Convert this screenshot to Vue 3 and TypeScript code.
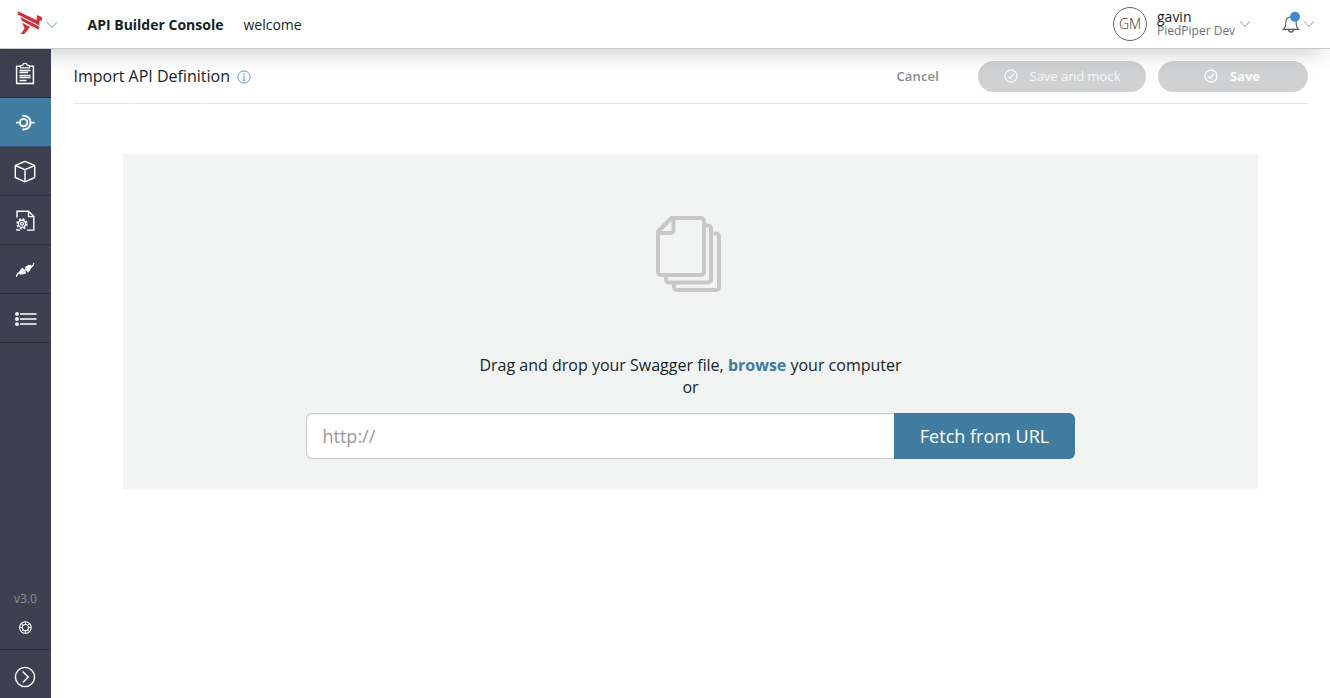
<script setup lang="ts">
import { ref } from 'vue'

type NavName = 'clipboard' | 'api' | 'cube' | 'config' | 'plug' | 'list'
const items: NavName[] = ['clipboard', 'api', 'cube', 'config', 'plug', 'list']
const active = ref<NavName>('api')
const url = ref('')
</script>

<template>
  <div class="app">
    <header class="topbar">
      <svg class="logo" width="26" height="24" viewBox="0 0 26 24" fill="#d92b32">
        <path d="M.8.2 19.8 9.2V4L25 6.2V9.6H22.4V14.4L.8 3.4Z" />
        <path d="M3.2 6 21.8 15.2V18.8L5.2 10Z" />
        <path d="M5.2 11.8 13 16 7.4 23H3.6L7.6 17.6Z" />
      </svg>
      <svg class="chev chev-logo" width="12" height="8" viewBox="0 0 12 8"><path d="M.8 1.2 6 6.3 11.2 1.2" /></svg>
      <strong class="product">API Builder Console</strong>
      <span class="project">welcome</span>
      <div class="avatar">GM</div>
      <div class="account">
        <span class="user">gavin</span>
        <span class="org">PiedPiper Dev</span>
      </div>
      <svg class="chev chev-user" width="12" height="8" viewBox="0 0 12 8"><path d="M.8 1.2 6 6.3 11.2 1.2" /></svg>
      <svg class="bell" width="20" height="24" viewBox="0 0 20 24">
        <path d="M1.3 18.4C4 16.5 3.7 14 3.9 10.8 4.1 7.6 6 6 9 6s4.9 1.6 5.1 4.8c.2 3.2-.1 5.7 2.6 7.6ZM6.5 18.6c.3 3.4 4.7 3.4 5 0" fill="none" stroke="#555" stroke-width="1.1" />
        <circle cx="13" cy="5.8" r="5" fill="#3d8bd0" />
      </svg>
      <svg class="chev chev-bell" width="12" height="8" viewBox="0 0 12 8"><path d="M.8 1.2 6 6.3 11.2 1.2" /></svg>
    </header>

    <div class="body">
      <aside class="sidebar">
        <nav>
          <a v-for="name in items" :key="name" class="nav-item" :class="{ active: active === name }" @click="active = name">
            <svg width="24" height="24" viewBox="0 0 24 24" fill="none" stroke="#fff" stroke-width="1.3">
              <g v-if="name === 'clipboard'">
                <path d="M7.5 4.2H3.6v17.2h16.8V4.2h-3.9" stroke-width="1.5" />
                <path d="M7.5 5.8V4.2c0-.8 1.3-.9 2.3-1C10 .7 14 .7 14.2 3.2c1 .1 2.3.2 2.3 1v1.6Z" />
                <path d="M6.5 8.5h11M6.5 10.5h8.5M6.5 13.5h11M6.5 15.5h11M6.5 18.5h7" stroke-width="1.3" />
              </g>
              <g v-else-if="name === 'api'" stroke-width="1.9">
                <circle cx="10.6" cy="11.6" r="3.7" />
                <path d="M3 11.6h4M9.3 4.8c4.4-.6 8.3 2.2 8.3 6.8s-3.9 7.4-8.3 6.8M17.4 11.6H21.6" />
              </g>
              <g v-else-if="name === 'cube'" stroke-width="1.4" stroke-linejoin="round">
                <path d="M12 1.4 21.7 5.5v12L12 21.8l-9.7-4.3v-12ZM2.3 5.5 12 9.6l9.7-4.1M12 9.6v12" />
              </g>
              <g v-else-if="name === 'config'">
                <path d="M4 8.5V2.2h11.5L20.8 7.6v13.5H14M15.5 2.2v5.4h5.3M4 19.8v1.3h3" stroke-width="1.4" />
                <circle cx="9" cy="14.8" r="3.6" stroke-width="1.4" />
                <circle cx="9" cy="14.8" r="1.4" stroke-width="1.2" />
                <circle cx="9" cy="14.8" r="4.8" stroke-width="1.7" stroke-dasharray="2 1.77" />
              </g>
              <g v-else-if="name === 'plug'">
                <path d="M3.5 18.8c.2-3 1.2-3.8 3.4-4.4M17 9.3c2.4-.4 3.4-1.4 3.7-4.3" stroke-width="1.4" />
                <path d="m6 14 2-3 1.6-1.4 1.4 2 1.6-.6-.6 1.8 1.4 2.4-4 1.4-3-.1Zm6-5 3.8-2.2 2.5.5.2 2.4-2 3.4-1.6 1.6-1.5-2.3-1.5.3.7-1.7Z" fill="#fff" stroke="none" />
              </g>
              <g v-else>
                <path d="M7 6.9H23.5M7 12H23.5M7 17.1H23.5" stroke-width="1.5" />
                <g stroke-width="1.5">
                  <circle cx="4" cy="6.9" r="1.2" />
                  <circle cx="4" cy="12" r="1.2" />
                  <circle cx="4" cy="17.1" r="1.2" />
                </g>
              </g>
            </svg>
          </a>
        </nav>
        <div class="side-foot">
          <span class="version">v3.0</span>
          <svg class="help" width="14" height="14" viewBox="0 0 14 14" fill="none" stroke="#fff">
            <circle cx="7.4" cy="6.6" r="5.8" stroke-width="1.1" />
            <circle cx="7.4" cy="6.6" r="3.1" stroke-width="1.1" />
            <path d="M7.4.8v3M7.4 9.4v3M1.6 6.6h3M10.2 6.6h3M3.3 2.5l2 2M9.5 8.7l2 2M3.3 10.7l2-2M9.5 4.5l2-2" stroke-width=".9" />
          </svg>
          <a class="expand">
            <svg width="22" height="22" viewBox="0 0 22 22" fill="none" stroke="#fff">
              <circle cx="11" cy="11" r="9.6" stroke-width="1.4" />
              <path d="m8.7 5.5 5.5 5.5-5.5 5.5" stroke-width="1.5" />
            </svg>
          </a>
        </div>
      </aside>

      <main class="main">
        <div class="page-head">
          <h1>Import API Definition</h1>
          <svg class="info" width="14" height="14" viewBox="0 0 14 14" fill="none" stroke="#659bb9">
            <circle cx="7" cy="7" r="6.1" stroke-width="1" />
            <path d="M7 6.1v4.2M5.9 6.2H7M5.7 10.3h2.6" stroke-width="1" />
            <path d="M7 3.4v1.3" stroke-width="1.3" />
          </svg>
          <button class="cancel">Cancel</button>
          <button class="pill mock" disabled>
            <svg width="14" height="14" viewBox="0 0 14 14"><circle cx="7" cy="7" r="6" /><path d="m4.2 7.2 2 2 3.9-4.4" /></svg>
            <span>Save and mock</span>
          </button>
          <button class="pill save" disabled>
            <svg width="14" height="14" viewBox="0 0 14 14"><circle cx="7" cy="7" r="6" /><path d="m4.2 7.2 2 2 3.9-4.4" /></svg>
            <span>Save</span>
          </button>
        </div>

        <section class="dropzone">
          <svg class="files" width="66" height="77" viewBox="0 0 66 77" fill="none" stroke="#c8c8c8" stroke-width="4" stroke-linejoin="round">
            <path d="M49.5 9.5h2.5a3 3 0 0 1 3 3v51a3 3 0 0 1-3 3H13a3 3 0 0 1-3-3v-3" />
            <path d="M57.5 17.5H60a3 3 0 0 1 3 3v50.5a3 3 0 0 1-3 3H21a3 3 0 0 1-3-3v-3" />
            <path d="M15.5 2H45a3 3 0 0 1 3 3v51a3 3 0 0 1-3 3H5a3 3 0 0 1-3-3V15.5ZM17.5 2v12a3 3 0 0 1-3 3H2" />
          </svg>
          <p class="hint">Drag and drop your Swagger file, <a>browse</a> your computer<br />or</p>
          <form class="fetch" @submit.prevent>
            <input v-model="url" type="text" placeholder="http://" />
            <button type="submit">Fetch from URL</button>
          </form>
        </section>
      </main>
    </div>
  </div>
</template>

<style>
body {
  margin: 0;
}
</style>

<style scoped>
.app {
  height: 100vh;
  display: flex;
  flex-direction: column;
  overflow: hidden;
  background: #fff;
  color: #151f26;
  font-family: "Open Sans", "Noto Sans", sans-serif;
}
* {
  box-sizing: border-box;
}
svg {
  display: block;
  flex: none;
}
button {
  font-family: inherit;
  border: 0;
  padding: 0;
}
.topbar {
  position: relative;
  z-index: 2;
  flex: none;
  height: 49px;
  display: flex;
  align-items: center;
  padding: 0 15px 0 17px;
  background: #fff;
  border-bottom: 1px solid #c5c9c7;
  box-shadow: 0 12px 20px -8px rgba(50, 60, 50, 0.25);
}
.logo {
  margin-top: -3px;
}
.chev {
  fill: none;
  stroke: #8d969b;
  stroke-width: 1;
}
.chev-logo {
  margin-left: 3px;
  margin-top: 1px;
  stroke: #719bb0;
}
.product {
  margin-left: 29.5px;
  font-size: 14px;
  font-weight: 700;
  white-space: nowrap;
}
.project {
  margin-left: 20px;
  font-size: 14px;
}
.avatar {
  margin-left: auto;
  width: 34px;
  height: 34px;
  border: 1px solid #666;
  border-radius: 50%;
  text-align: center;
  font-size: 14px;
  font-weight: 300;
  line-height: 32px;
  color: #333;
}
.account {
  margin-left: 10px;
  margin-top: -1px;
  width: 79px;
  display: flex;
  flex-direction: column;
  white-space: nowrap;
}
.user {
  font-size: 14px;
  line-height: 14px;
}
.org {
  font-size: 12px;
  line-height: 14px;
  color: #6c7176;
}
.chev-user {
  margin-left: 3px;
}
.bell {
  margin-left: 31px;
  margin-top: -3px;
}
.chev-bell {
  margin-left: 1px;
}
.body {
  flex: 1;
  display: flex;
  min-height: 0;
}
.sidebar {
  width: 51px;
  flex: none;
  display: flex;
  flex-direction: column;
  justify-content: space-between;
  background: #3d4050;
}
.nav-item {
  height: 49px;
  display: flex;
  align-items: center;
  justify-content: center;
  padding: 2px 1px 0 0;
  border-bottom: 1px solid #292c3a;
  cursor: pointer;
}
.nav-item.active {
  background: #407ca0;
  border-bottom-color: #35566d;
}
.side-foot {
  display: flex;
  flex-direction: column;
  align-items: center;
}
.version {
  font-size: 12px;
  line-height: 16px;
  color: #8d9093;
}
.help {
  margin-top: 14px;
  margin-right: 1px;
}
.expand {
  width: 100%;
  height: 49px;
  margin-top: 14px;
  padding: 6px 1px 0 0;
  display: flex;
  align-items: center;
  justify-content: center;
  border-top: 1px solid #292c3a;
}
.main {
  flex: 1;
  min-width: 0;
  padding: 0 22px;
}
.page-head {
  height: 55px;
  margin-left: 0.5px;
  display: flex;
  align-items: center;
  border-bottom: 1px solid #e6e6e6;
}
h1 {
  margin: 0;
  font-size: 16px;
  font-weight: 400;
  line-height: 22px;
}
.info {
  margin-left: 7px;
  margin-top: 1px;
}
.cancel {
  margin-left: auto;
  background: none;
  font-size: 13px;
  font-weight: 600;
  letter-spacing: 0.15px;
  color: #868a8d;
}
.pill {
  height: 31px;
  display: flex;
  align-items: center;
  justify-content: center;
  border-radius: 16px;
  background: #d0d1d3;
  color: #fff;
  font-size: 13px;
}
.pill svg {
  margin-right: 12px;
  fill: none;
  stroke: currentColor;
  stroke-width: 1.3;
}
.mock {
  width: 168px;
  margin-left: 39px;
  font-weight: 500;
  color: #f8f8f8;
}
.save {
  width: 150px;
  margin-left: 12px;
  padding-right: 2px;
  font-weight: 700;
}
.dropzone {
  margin: 50px 50px 0;
  height: 335px;
  padding-top: 62px;
  display: flex;
  flex-direction: column;
  align-items: center;
  background: #f2f4f4;
}
.files {
  margin-right: 4px;
}
.hint {
  margin: 61px 0 0;
  font-size: 16px;
  line-height: 22px;
  text-align: center;
}
.hint a {
  color: #407ca0;
  font-weight: 700;
}
.fetch {
  margin-top: 15px;
  width: 769px;
  height: 46px;
  display: flex;
}
.fetch input {
  flex: 1;
  min-width: 0;
  padding: 0 16px 0 15.5px;
  border: 1px solid #c9cbca;
  border-right: 0;
  border-radius: 6px 0 0 6px;
  background: #fff;
  box-shadow: inset 0 1px 1px rgba(0, 0, 0, 0.075);
  font: 400 18px "Open Sans", sans-serif;
  color: #333;
  outline: 0;
}
.fetch input::placeholder {
  color: #999;
}
.fetch button {
  width: 181px;
  border-radius: 0 6px 6px 0;
  background: #407ca0;
  color: #fff;
  font-size: 18px;
}
</style>
